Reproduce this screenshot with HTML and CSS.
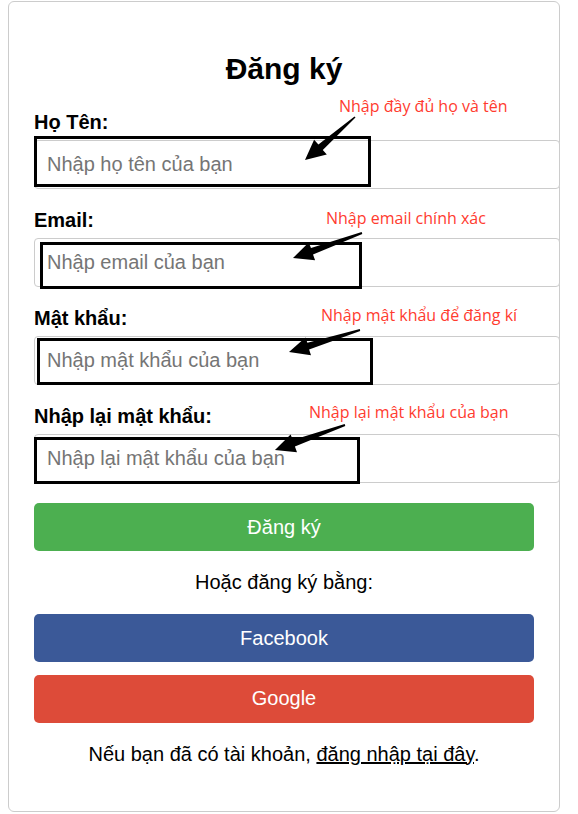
FILE: index.html
```html
<!DOCTYPE html>
<html lang="vi">
<head>
<meta charset="utf-8">
<title>Đăng ký</title>
<link rel="stylesheet" href="styles.css">
</head>
<body>
<div class="page">
  <div class="card">
    <h2 class="title">Đăng ký</h2>
    <form class="form">
      <div class="group">
        <label class="label">Họ Tên:</label>
        <input class="input" type="text" placeholder="Nhập họ tên của bạn">
      </div>
      <div class="group">
        <label class="label">Email:</label>
        <input class="input" type="email" placeholder="Nhập email của bạn">
      </div>
      <div class="group">
        <label class="label">Mật khẩu:</label>
        <input class="input" type="password" placeholder="Nhập mật khẩu của bạn">
      </div>
      <div class="group">
        <label class="label">Nhập lại mật khẩu:</label>
        <input class="input" type="password" placeholder="Nhập lại mật khẩu của bạn">
      </div>
      <button class="btn btn-green" type="button">Đăng ký</button>
    </form>
    <p class="center">Hoặc đăng ký bằng:</p>
    <button class="btn btn-fb" type="button">Facebook</button>
    <button class="btn btn-gg" type="button">Google</button>
    <p class="center">Nếu bạn đã có tài khoản, <a class="link" href="#">đăng nhập tại đây</a>.</p>
  </div>

  <svg class="marks" width="578" height="814" viewBox="0 0 578 814" aria-hidden="true">
    <g fill="none" stroke="#000" stroke-width="3">
      <rect x="35.5" y="137.5" width="334" height="48"/>
      <rect x="41.5" y="243.5" width="319" height="44"/>
      <rect x="38.5" y="339.5" width="333" height="44"/>
      <rect x="35.5" y="438.5" width="323" height="44"/>
    </g>
    <g fill="#000">
      <polygon points="355.5,117.6 322.8,150.0 326.8,154.6 305,160 314.1,139.8 318.4,144.6 354.5,116.4"/>
      <polygon points="362.3,233.9 313.0,254.6 315.1,260.2 293,258 308.7,242.6 311.0,248.0 361.7,232.1"/>
      <polygon points="360.2,330.9 309.1,349.5 311.0,355.2 289,352 305.4,337.5 307.4,342.7 359.8,329.1"/>
      <polygon points="345.3,425.9 294.9,446.6 297.0,452.2 275,450 290.6,434.4 292.8,440.0 344.7,424.1"/>
    </g>
  </svg>
  <div class="note note-1">Nhập đầy đủ họ và tên</div>
  <div class="note note-2">Nhập email chính xác</div>
  <div class="note note-3">Nhập mật khẩu để đăng kí</div>
  <div class="note note-4">Nhập lại mật khẩu của bạn</div>
</div>
</body>
</html>
```
FILE: styles.css
```css
html, body {
  margin: 0;
  padding: 0;
  background: #fff;
}
body {
  font-family: "Liberation Sans", Arial, sans-serif;
  font-size: 20px;
  color: #000;
}
.page {
  position: relative;
  width: 578px;
  min-height: 814px;
  padding-top: 1px;
  box-sizing: border-box;
}
.card {
  margin-left: 8px;
  width: 500px;
  padding: 25px;
  border: 1px solid #cccccc;
  border-radius: 6px;
  background: #fff;
}
.title {
  margin: 25px 0;
  font-size: 30px;
  font-weight: bold;
  text-align: center;
}
.form {
  margin: 0;
}
.group {
  margin-bottom: 20px;
}
.label {
  display: block;
  margin-bottom: 6px;
  font-weight: bold;
  font-size: 20px;
}
.input {
  display: block;
  width: 100%;
  padding: 12px;
  border: 1px solid #cccccc;
  border-radius: 4px;
  font-family: "Liberation Sans", Arial, sans-serif;
  font-size: 20px;
  color: #000;
  background: #fff;
  margin: 0;
}
.input::placeholder {
  color: #757575;
}
.btn {
  display: block;
  width: 100%;
  padding: 12.5px;
  margin: 0 0 12.5px 0;
  border: none;
  border-radius: 5px;
  font-family: "Liberation Sans", Arial, sans-serif;
  font-size: 20px;
  color: #fff;
  box-sizing: border-box;
  line-height: normal;
}
.btn-green { background: #4caf50; }
.btn-fb { background: #3b5998; }
.btn-gg { background: #dd4b39; }
.center {
  margin: 20px 0;
  text-align: center;
}
.link {
  color: #000;
  text-decoration: underline;
}
.marks {
  position: absolute;
  left: 0;
  top: 0;
  pointer-events: none;
}
.note {
  position: absolute;
  font-family: "Open Sans", "Noto Sans", sans-serif;
  font-size: 16px;
  line-height: 20px;
  color: #ff3b2f;
  white-space: nowrap;
}
.note-1 { left: 339px; top: 96px; }
.note-2 { left: 326px; top: 208px; }
.note-3 { left: 321px; top: 305px; }
.note-4 { left: 309px; top: 402px; }
```
